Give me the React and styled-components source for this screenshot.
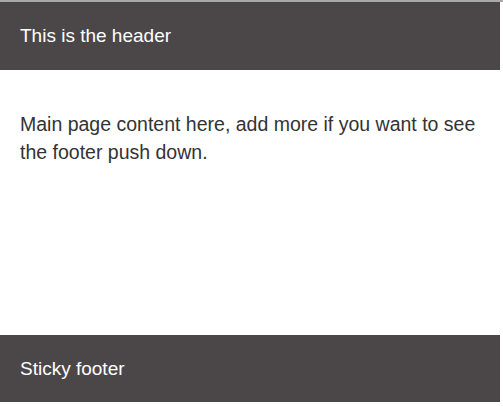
import React from 'react'
import styled, { createGlobalStyle } from 'styled-components'

const GlobalStyle = createGlobalStyle`
  html, body {
    margin: 0;
    padding: 0;
    background: #fff;
  }
  body {
    border-top: 2px solid #a9a9a9;
    font-family: "Liberation Sans", Arial, sans-serif;
  }
`

const Page = styled.div`
  width: 500px;
  height: 400px;
  display: flex;
  flex-direction: column;
`

const Bar = styled.div`
  background: #4b4749;
  color: #fff;
  height: ${p => p.$h}px;
  padding: 0 20px;
  display: flex;
  align-items: center;
  font-size: 19px;
  flex-shrink: 0;
`

const Main = styled.main`
  flex: 1;
  padding: 40px 20px 0;
  color: #333;
  font-size: 19.5px;
  line-height: 28px;
`

const Text = styled.p`
  margin: 0;
`

const App = () => (
  <>
    <GlobalStyle />
    <Page>
      <Bar $h={68}>This is the header</Bar>
      <Main>
        <Text>Main page content here, add more if you want to see the footer push down.</Text>
      </Main>
      <Bar $h={67}>Sticky footer</Bar>
    </Page>
  </>
)

export default App
